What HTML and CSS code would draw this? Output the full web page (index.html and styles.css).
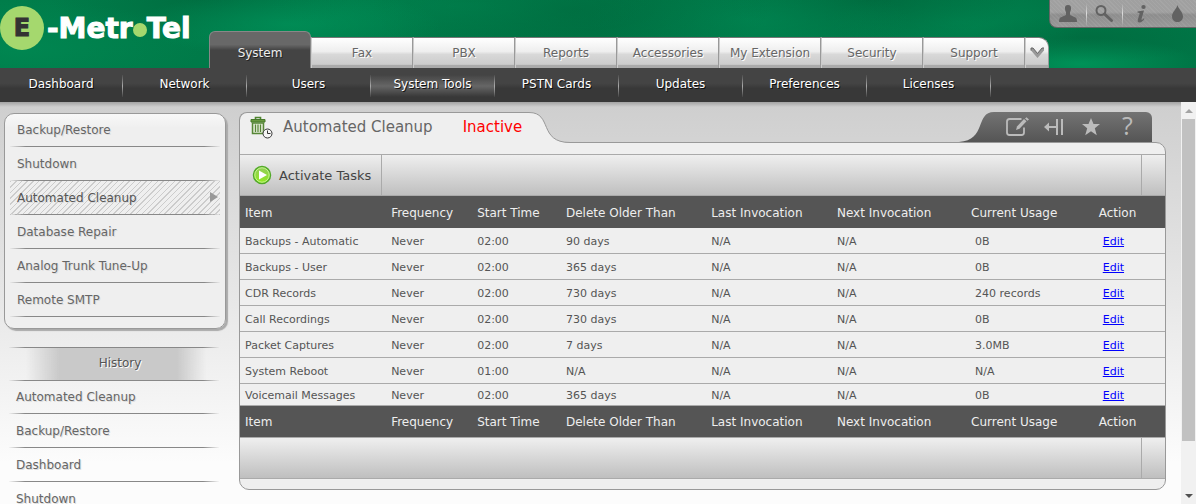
FILE: index.html
```html
<!DOCTYPE html>
<html lang="en">
<head>
<meta charset="UTF-8">
<meta name="viewport" content="width=device-width, initial-scale=1.0">
<title>Automated Cleanup</title>
<link rel="stylesheet" href="styles.css">
</head>
<body>
<header class="header">
    <a href="#" class="logo" aria-label="E-MetroTel">
        <span class="logo-circle">E</span>
        <span>-Metr</span><span class="logo-dot"></span><span>Tel</span>
    </a>
    <ul class="tabs">
        <li><a href="#" class="tab active">System</a></li>
        <li><a href="#" class="tab">Fax</a></li>
        <li><a href="#" class="tab">PBX</a></li>
        <li><a href="#" class="tab">Reports</a></li>
        <li><a href="#" class="tab">Accessories</a></li>
        <li><a href="#" class="tab">My Extension</a></li>
        <li><a href="#" class="tab">Security</a></li>
        <li><a href="#" class="tab">Support</a></li>
        <li>
            <button class="tab tab-more" aria-label="More">
                <svg width="15" height="12" viewBox="0 0 15 12"><path d="M1 1h2l4.500 5.500L12 1h2v2.500L7.500 11 1 3.500z" fill="#999"/><path d="M1 3.500V1h2l4.500 5.500L12 1h2" fill="none" stroke="#666"/></svg>
            </button>
        </li>
    </ul>
    <div class="tools">
        <button class="tool" aria-label="User">
            <svg width="20" height="20" viewBox="0 0 20 20"><path d="M10 1c2.500 0 3.200 1.500 3 4-.1 1.500-.8 2.500-1 3.500v2.500l5.500 2.500c1 .5 1.500 2 1.500 4.500H1c0-2.500.5-4 1.500-4.500L8 11V8.500C7.800 7.500 7.100 6.500 7 5c-.2-2.500.5-4 3-4z" fill="#626262"/></svg>
        </button>
        <button class="tool" aria-label="Search">
            <svg width="20" height="20" viewBox="0 0 20 20"><circle cx="7" cy="6.500" r="4.500" fill="none" stroke="#626262" stroke-width="2"/><path d="M10.500 10l7 6.500" stroke="#626262" stroke-width="3" stroke-linecap="round"/></svg>
        </button>
        <button class="tool" aria-label="Information">
            <svg width="20" height="20" viewBox="0 0 20 20"><ellipse cx="12.500" cy="3" rx="2.200" ry="2" fill="#626262"/><path d="M6.500 7.500c2-.1 3.800-.6 6.500-1l-2.500 8.500c-.3 1.300.9.800 2.200-.8l.8.600c-1.800 2.800-3.600 3.800-5.300 3.600-1.900-.3-1.700-1.800-1.200-3.400l1.500-5c.3-1-.4-1.100-2-1.200z" fill="#626262"/></svg>
        </button>
        <button class="tool" aria-label="Theme color">
            <svg width="20" height="20" viewBox="0 0 20 20"><path d="M10.500 1c.7 3.500 5.500 7 5.500 11.500 0 3.500-2.500 5.500-5.500 5.500S5 16 5 12.500C5 8 9.800 4.500 10.500 1z" fill="#626262"/></svg>
        </button>
    </div>
</header>

<nav>
    <ul class="subnav">
        <li><a href="#">Dashboard</a></li>
        <li><a href="#">Network</a></li>
        <li><a href="#">Users</a></li>
        <li class="active"><a href="#">System Tools</a></li>
        <li><a href="#">PSTN Cards</a></li>
        <li><a href="#">Updates</a></li>
        <li><a href="#">Preferences</a></li>
        <li><a href="#">Licenses</a></li>
    </ul>
</nav>

<div class="page">
    <div class="content">
        <aside class="sidebar">
            <ul class="menu menu-box">
                <li><a href="#">Backup/Restore</a></li>
                <li><a href="#">Shutdown</a></li>
                <li class="active"><a href="#">Automated Cleanup</a></li>
                <li><a href="#">Database Repair</a></li>
                <li><a href="#">Analog Trunk Tune-Up</a></li>
                <li><a href="#">Remote SMTP</a></li>
            </ul>
            <div class="history">
                <h2 class="history-title">History</h2>
                <ul class="menu">
                    <li><a href="#">Automated Cleanup</a></li>
                    <li><a href="#">Backup/Restore</a></li>
                    <li><a href="#">Dashboard</a></li>
                    <li><a href="#">Shutdown</a></li>
                </ul>
            </div>
        </aside>

        <main class="main">
            <div class="panel-top">
                <div class="panel-title">
                    <svg width="24" height="24" viewBox="0 0 24 24">
                        <path d="M5.500 3.500v-2h5v2" fill="none" stroke="#4f8530" stroke-width="1.600"/>
                        <path d="M1 3.500h14v2.500H1z" fill="#67983f" stroke="#47792b"/>
                        <path d="M2.500 7h11v10.500h-11z" fill="#dfe8d3" stroke="#568637" stroke-width="1.500"/>
                        <path d="M5.500 8.500v7.500M8 8.500v7.500M10.500 8.500v7.500" stroke="#568637" stroke-width="1.200"/>
                        <circle cx="17.500" cy="17.500" r="4.500" fill="#f5f5f5" stroke="#333"/>
                        <path d="M17.500 14.500v3h3" fill="none" stroke="#333"/>
                    </svg>
                    <h1>Automated Cleanup</h1>
                    <span class="status">Inactive</span>
                </div>
                <svg class="panel-curve" width="45" height="31" viewBox="0 0 45 31">
                    <path d="M0 .5C24 .5 9 30.500 41 30.500H45V31H0z" fill="#efefef"/>
                    <path d="M0 .5C24 .5 9 30.500 41 30.500H45" fill="none" stroke="#999"/>
                </svg>
                <div class="panel-actions">
                    <svg class="actions-curve" width="39" height="30" viewBox="0 0 39 30">
                        <defs><linearGradient id="dark" x1="0" y1="0" x2="0" y2="1"><stop offset="0" stop-color="#737373"/><stop offset="1" stop-color="#555"/></linearGradient></defs>
                        <path d="M0 30C28 28 16 0 35 0H39V30z" fill="url(#dark)"/>
                    </svg>
                    <div class="action-buttons">
                        <button aria-label="Edit note">
                            <svg width="24" height="20" viewBox="0 0 24 20"><path d="M16.500 2H4.500Q2 2 2 4.500v11Q2 18 4.500 18h12q2.500 0 2.500-2.500v-5" fill="none" stroke="#bbb" stroke-width="1.800"/><path d="M11 13l1-3.500 7-7.500 2.500 2.300-7 7.500z" fill="#bbb"/><path d="M20 1.500l1.500-1.200L24 2.500l-1.500 1.300z" fill="#bbb"/></svg>
                        </button>
                        <button aria-label="Collapse">
                            <svg width="20" height="20" viewBox="0 0 20 20"><path d="M4 10h9M13 2v16M18 2v16" stroke="#bbb" stroke-width="2"/><path d="M0 10l5-4.500v9z" fill="#bbb"/></svg>
                        </button>
                        <button aria-label="Bookmark">
                            <svg width="20" height="20" viewBox="0 0 20 20"><path d="M10 1l2.500 6h6.500l-5.200 4.200 2 7L10 14.200 4.200 18.200l2-7L1 7h6.500z" fill="#bbb"/></svg>
                        </button>
                        <button class="help" aria-label="Help">?</button>
                    </div>
                </div>
            </div>

            <div class="panel">
                <div class="toolbar">
                    <button class="activate">
                        <svg width="20" height="20" viewBox="0 0 20 20">
                            <defs><linearGradient id="play" x1="0" y1="0" x2="0" y2="1"><stop offset="0" stop-color="#92cb5d"/><stop offset="1" stop-color="#91ea1d"/></linearGradient></defs>
                            <circle cx="10" cy="10" r="8.500" fill="url(#play)" stroke="#52a929" stroke-width="1.500"/>
                            <circle cx="10" cy="10" r="7.200" fill="none" stroke="#c5f491"/>
                            <path d="M7 5.500l8 4.500-8 4.500z" fill="#fff"/>
                        </svg>
                        Activate Tasks
                    </button>
                    <div class="toolbar-end"></div>
                </div>
                <table>
                    <colgroup>
                        <col class="c-item"><col class="c-freq"><col class="c-start"><col class="c-older">
                        <col class="c-last"><col class="c-next"><col class="c-usage"><col class="c-action">
                    </colgroup>
                    <thead>
                        <tr><th>Item</th><th>Frequency</th><th>Start Time</th><th>Delete Older Than</th><th>Last Invocation</th><th>Next Invocation</th><th>Current Usage</th><th>Action</th></tr>
                    </thead>
                    <tbody>
                        <tr><td>Backups - Automatic</td><td>Never</td><td>02:00</td><td>90 days</td><td>N/A</td><td>N/A</td><td>0B</td><td><a href="#">Edit</a></td></tr>
                        <tr><td>Backups - User</td><td>Never</td><td>02:00</td><td>365 days</td><td>N/A</td><td>N/A</td><td>0B</td><td><a href="#">Edit</a></td></tr>
                        <tr><td>CDR Records</td><td>Never</td><td>02:00</td><td>730 days</td><td>N/A</td><td>N/A</td><td>240 records</td><td><a href="#">Edit</a></td></tr>
                        <tr><td>Call Recordings</td><td>Never</td><td>02:00</td><td>730 days</td><td>N/A</td><td>N/A</td><td>0B</td><td><a href="#">Edit</a></td></tr>
                        <tr><td>Packet Captures</td><td>Never</td><td>02:00</td><td>7 days</td><td>N/A</td><td>N/A</td><td>3.0MB</td><td><a href="#">Edit</a></td></tr>
                        <tr><td>System Reboot</td><td>Never</td><td>01:00</td><td>N/A</td><td>N/A</td><td>N/A</td><td>N/A</td><td><a href="#">Edit</a></td></tr>
                        <tr><td>Voicemail Messages</td><td>Never</td><td>02:00</td><td>365 days</td><td>N/A</td><td>N/A</td><td>0B</td><td><a href="#">Edit</a></td></tr>
                    </tbody>
                    <tfoot>
                        <tr><th>Item</th><th>Frequency</th><th>Start Time</th><th>Delete Older Than</th><th>Last Invocation</th><th>Next Invocation</th><th>Current Usage</th><th>Action</th></tr>
                    </tfoot>
                </table>
                <div class="toolbar">
                    <div class="toolbar-end"></div>
                </div>
            </div>
        </main>
    </div>

    <div class="scrollbar">
        <span class="arrow-up"></span>
        <span class="thumb"></span>
        <span class="arrow-down"></span>
    </div>
</div>
</body>
</html>
```
FILE: styles.css
```css
* {
    box-sizing: border-box;
}

body {
    margin: 0;
    height: 100vh;
    display: flex;
    flex-direction: column;
    overflow: hidden;
    font-family: Verdana, "DejaVu Sans", sans-serif;
    font-size: 12px;
    color: #555;
}

ul {
    list-style: none;
    margin: 0;
    padding: 0;
}

button {
    font: inherit;
    color: inherit;
    background: none;
    border: 0;
    padding: 0;
    cursor: pointer;
}

a {
    text-decoration: none;
    color: inherit;
}

svg {
    display: block;
}

/* Header */
.header {
    display: flex;
    height: 68px;
    flex-shrink: 0;
    background:
        radial-gradient(ellipse 150px 34px at 290px 24px, rgba(0, 158, 98, 0.5), transparent),
        radial-gradient(ellipse 190px 34px at 460px 6px, rgba(0, 140, 85, 0.3), transparent),
        radial-gradient(ellipse 180px 50px at 20px 50px, rgba(0, 150, 92, 0.4), transparent),
        radial-gradient(ellipse 150px 40px at 200px 0, rgba(0, 90, 52, 0.4), transparent),
        radial-gradient(ellipse 200px 60px at 570px 10px, rgba(0, 88, 50, 0.4), transparent),
        radial-gradient(ellipse 160px 40px at 750px 20px, rgba(0, 145, 90, 0.4), transparent),
        radial-gradient(ellipse 150px 40px at 870px 0, rgba(0, 88, 50, 0.4), transparent),
        radial-gradient(ellipse 130px 34px at 960px 22px, rgba(0, 145, 88, 0.4), transparent),
        radial-gradient(ellipse 120px 24px at 1090px 38px, rgba(0, 90, 52, 0.3), transparent),
        radial-gradient(ellipse 120px 26px at 1080px 64px, rgba(0, 165, 100, 0.6), transparent),
        linear-gradient(170deg, #007d4a, #007445);
}

.logo {
    display: flex;
    align-items: center;
    flex-shrink: 0;
    width: 209px;
    height: 56px;
    font-family: "DejaVu Sans", sans-serif;
    font-size: 28px;
    font-weight: bold;
    color: #fff;
    -webkit-text-stroke: 1px;
}

.logo-circle {
    display: flex;
    align-items: center;
    justify-content: center;
    width: 44px;
    height: 44px;
    margin-right: 3px;
    border-radius: 50%;
    background: #a5d86e;
    font-size: 24px;
    color: #333;
}

.logo-dot {
    width: 14px;
    height: 14px;
    margin-top: 4px;
    border-radius: 50%;
    background: #a5d86e;
}

.tabs {
    display: flex;
    flex-shrink: 0;
    align-items: flex-end;
}

.tab {
    display: flex;
    align-items: center;
    justify-content: center;
    width: 102px;
    height: 31px;
    border-top: 1px solid #777;
    border-left: 1px solid #ccc;
    border-right: 1px solid #999;
    background: linear-gradient(#fff, #eee 45%, #d8d8d8 55%, #ccc 88%, #aaa 90%);
    color: #666;
    text-shadow: 1px 1px 0 #fff;
}

.tab.active {
    height: 37px;
    padding-top: 6px;
    border: 1px solid #888;
    border-bottom: 0;
    border-radius: 6px 6px 0 0;
    background: linear-gradient(#686868 35%, #444 50%);
    color: #eee;
    text-shadow: 1px 1px 0 #222;
}

.tab-more {
    width: 24px;
    border-radius: 0 10px 0 0;
}

.tools {
    display: flex;
    flex: 1;
    height: 28px;
    border: 1px solid #666;
    border-top: 0;
    border-right: 0;
    border-radius: 0 0 0 8px;
    background:
        repeating-linear-gradient(45deg, rgba(255, 255, 255, 0.06) 0 1px, transparent 1px 3px),
        linear-gradient(#a0a0a0 45%, #8d8d8d 55%, #999);
}

.tool {
    display: flex;
    flex: 1;
    align-items: center;
    justify-content: center;
    border-right: 1px solid transparent;
}

.tool:nth-child(-n+2) {
    border-image: linear-gradient(transparent 15%, #ddd 50%, transparent 95%) 1;
}

/* Second level menu */
.subnav {
    display: flex;
    height: 34px;
    padding-top: 7px;
    background: linear-gradient(#444 45%, #383838 60%);
}

.subnav li {
    width: 124px;
    height: 22px;
    border-right: 1px solid;
    border-image: linear-gradient(transparent, #aaa 50%, transparent) 1;
    text-align: center;
    line-height: 18px;
    color: #fff;
    text-shadow: 1px 1px 0 #111;
}

.subnav li:first-child {
    width: 123px;
}

.subnav .active {
    background: linear-gradient(rgba(100, 100, 100, 0), #666 50%, rgba(100, 100, 100, 0));
}

/* Content */
.page {
    display: flex;
    flex: 1;
    min-height: 0;
}

.content {
    display: flex;
    flex: 1;
    gap: 13px;
    padding: 10px 15px 0 4px;
    background: linear-gradient(#a3a3a3, #cfcfcf 5px, #fcfcfc 360px);
}

.sidebar {
    width: 222px;
    flex-shrink: 0;
}

.menu li {
    height: 34px;
    padding: 0 7px;
    line-height: 34px;
    border-bottom: 1px solid;
    border-image: linear-gradient(to right, transparent, #888 8%, #888 92%, transparent) 1;
    text-shadow: 1px 1px 0 #ddd;
    color: #666;
}

.menu li:first-child {
    height: 33px;
    line-height: 32px;
}

.menu-box {
    height: 216px;
    margin-top: 1px;
    padding: 0 5px;
    border: 1px solid #999;
    border-radius: 10px;
    box-shadow: 2px 2px 1px #aaa;
    background: linear-gradient(#f8f8f8, #efefef 14px);
}

.menu-box .active {
    position: relative;
    color: #555;
    background: repeating-linear-gradient(135deg, #ccc 0 1px, #efefef 1px 4px);
}

.menu-box .active::after {
    content: "";
    position: absolute;
    top: 11px;
    right: 2px;
    border: 5px solid transparent;
    border-left: 8px solid #999;
    border-right: 0;
}

.history {
    margin: 18px 7px 0 5px;
}

.history-title {
    margin: 0;
    height: 34px;
    padding-left: 12px;
    font-size: 12px;
    font-weight: normal;
    line-height: 30px;
    text-align: center;
    text-shadow: 1px 1px 0 #fff;
    border: solid;
    border-width: 1px 0;
    border-image: linear-gradient(to right, transparent, #888 8%, #888 92%, transparent) 1;
    background: linear-gradient(to right, transparent 8%, #c9c9c9 24%, #c9c9c9 80%, transparent 94%);
}

.main {
    flex: 1;
    min-width: 0;
}

/* Panel heading, its curve runs into the top edge of the panel */
.panel-top {
    display: flex;
    height: 31px;
}

.panel-title {
    display: flex;
    gap: 9px;
    width: 290px;
    padding: 3px 0 0 10px;
    background: #efefef;
    border: solid #999;
    border-width: 1px 0 0 1px;
    border-radius: 8px 0 0 0;
}

.panel-title h1,
.status {
    margin: 0;
    font-size: 15px;
    font-weight: normal;
    line-height: 22px;
    color: #666;
}

.panel-title .status {
    margin-left: 21px;
    color: #f00;
}

.panel-curve,
.panel-title {
    position: relative;
    z-index: 1;
}

.panel-actions {
    display: flex;
    height: 30px;
    margin: 0 14px 0 auto;
}

.action-buttons {
    display: flex;
    padding-right: 6px;
    background: linear-gradient(#737373, #555);
    border-radius: 0 6px 0 0;
}

.action-buttons button {
    display: flex;
    align-items: center;
    justify-content: center;
    width: 37px;
}

.action-buttons .help {
    font-family: "Open Sans", sans-serif;
    font-size: 25px;
    line-height: 26px;
    align-items: flex-start;
    color: #bbb;
}

.panel {
    position: relative;
    padding: 11px 0 10px;
    margin-top: -1px;
    background: #efefef;
    border: 1px solid #999;
    border-radius: 0 10px 10px 10px;
}

.toolbar {
    display: flex;
    justify-content: space-between;
    height: 42px;
    border: solid #aaa;
    border-width: 1px 0;
    background: linear-gradient(#efefef, #bfbfbf);
}

.activate {
    display: flex;
    align-items: center;
    gap: 7px;
    padding: 0 10px 0 12px;
    border-right: 1px solid #aaa;
    font-size: 13px;
    color: #444;
}

.toolbar-end {
    width: 24px;
    margin-left: auto;
    border-left: 1px solid #aaa;
}

/* Table */
table {
    width: 100%;
    table-layout: fixed;
    border-collapse: separate;
    border-spacing: 0;
}

.c-item { width: 15.8%; }
.c-freq { width: 9.3%; }
.c-start { width: 9.6%; }
.c-older { width: 15.7%; }
.c-last { width: 13.6%; }
.c-next { width: 14.5%; }
.c-usage { width: 13.8%; }

th {
    height: 32px;
    padding: 1px 5px 0;
    background: #555;
    color: #eee;
    font-weight: normal;
    text-align: left;
    white-space: nowrap;
}

td {
    height: 26px;
    padding: 2px 5px 0;
    font-size: 11px;
    border-bottom: 1px solid #aaa;
    white-space: nowrap;
}

td:nth-child(n+7) {
    padding-left: 9px;
}

td a {
    color: #00f;
    text-decoration: underline;
}

tbody tr:last-child td {
    height: 22px;
}

tfoot th {
    height: 31px;
}

/* Scrollbar */
.scrollbar {
    display: flex;
    flex-direction: column;
    align-items: center;
    width: 15px;
    padding: 7px 0 6px;
    background: #f1f1f1;
}

.thumb {
    width: 13px;
    height: 322px;
    margin: 6px 0 auto;
    background: #c1c1c1;
}

.arrow-up,
.arrow-down {
    border: 4px solid transparent;
}

.arrow-up {
    border-top: 0;
    border-bottom-color: #a3a3a3;
}

.arrow-down {
    border-bottom: 0;
    border-top-color: #505050;
}
```
